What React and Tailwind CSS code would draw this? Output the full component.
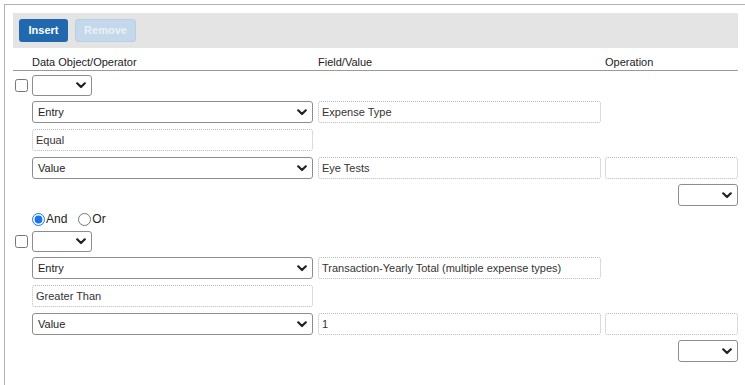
import React from 'react';

function Chevron() {
  return (
    <svg width="10" height="7" viewBox="0 0 10 7" className="shrink-0">
      <path d="M1.2 1.3 L5 5 L8.8 1.3" fill="none" stroke="#222" strokeWidth="2.2" strokeLinecap="round" strokeLinejoin="round" />
    </svg>
  );
}

function Select({ value = '', w }) {
  return (
    <div className={`${w} flex items-center justify-between pl-[5px] pr-[5px] border border-[#8d8d8d] rounded-[3px] bg-white text-[11px] text-[#222]`}>
      <span>{value}</span>
      <Chevron />
    </div>
  );
}

function Field({ value = '', w }) {
  return (
    <div className={`${w} h-[22px] flex items-center pl-[3px] border border-dotted border-[#b8b8b8] rounded-[3px] bg-white text-[11px] text-[#333]`}>
      {value}
    </div>
  );
}

function Criterion({ field, operator, value }) {
  return (
    <div className="flex flex-col">
      <div className="flex items-center h-[21px] mt-[4px]">
        <input type="checkbox" className="w-[13px] h-[13px] ml-[2px] mr-[4px] m-0" readOnly />
        <Select w="w-[60px] h-[21px]" />
      </div>
      <div className="flex gap-[5px] pl-[19px] mt-[5px]">
        <Select value="Entry" w="w-[281px] h-[22px]" />
        <Field value={field} w="w-[283px]" />
      </div>
      <div className="flex pl-[19px] mt-[6px]">
        <Field value={operator} w="w-[281px]" />
      </div>
      <div className="flex gap-[5px] pl-[19px] mt-[6px]">
        <Select value="Value" w="w-[281px] h-[22px]" />
        <Field value={value} w="w-[283px]" />
        <div className="ml-[-1px]">
          <Field w="w-[133px]" />
        </div>
      </div>
      <div className="flex justify-end mt-[5px]">
        <Select w="w-[60px] h-[22px]" />
      </div>
    </div>
  );
}

export default function App() {
  return (
    <div className="w-[745px] h-[385px] bg-white overflow-hidden font-['Liberation_Sans',Arial,sans-serif]">
      <div className="mt-[4px] ml-[4px] w-[741px] h-[381px] border-l border-t border-[#b3b3b3] pt-[8px] pl-[8px] pr-[7px]">
        {/* Toolbar */}
        <div className="h-[35px] bg-[#e4e4e4] flex items-center gap-[7px] px-[6px]">
          <button className="w-[49px] h-[23px] rounded-[3px] bg-[#2069ae] text-white text-[11px] font-bold">Insert</button>
          <button className="w-[61px] h-[23px] rounded-[3px] bg-[#c3d8ea] text-[#e9f1f8] text-[11px] font-bold border border-[#b8cfe3]">Remove</button>
        </div>

        {/* Header */}
        <div className="h-[23px] flex items-end pb-[1px] border-b border-[#9a9a9a] text-[11px] leading-[13px] text-[#222]">
          <span className="ml-[19px] w-[286px]">Data Object/Operator</span>
          <span className="w-[287px]">Field/Value</span>
          <span>Operation</span>
        </div>

        <Criterion field="Expense Type" operator="Equal" value="Eye Tests" />

        <div className="flex items-center gap-[11px] pl-[19px] mt-[5px] h-[16px] text-[12px] text-[#222]">
          <label className="flex items-center gap-[1px]">
            <input type="radio" name="conj" defaultChecked className="w-[13px] h-[13px] m-0 accent-[#1a73e8]" />
            And
          </label>
          <label className="flex items-center gap-[1px]">
            <input type="radio" name="conj" className="w-[13px] h-[13px] m-0" />
            Or
          </label>
        </div>

        <Criterion field="Transaction-Yearly Total (multiple expense types)" operator="Greater Than" value="1" />
      </div>
    </div>
  );
}
